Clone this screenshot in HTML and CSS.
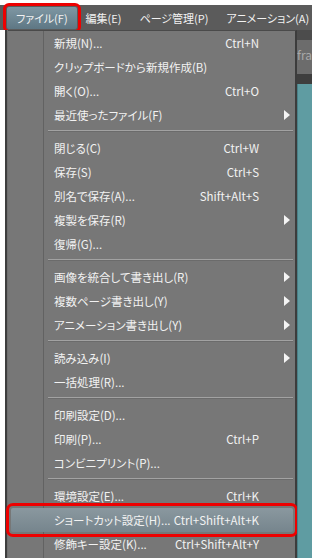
FILE: index.html
```html
<!DOCTYPE html>
<html lang="ja">
<head>
    <meta charset="UTF-8">
    <meta name="viewport" content="width=device-width, initial-scale=1.0">
    <title>ファイルメニュー</title>
    <link rel="stylesheet" href="styles.css">
</head>
<body>
    <div class="menubar">
        <span class="bar-item active">ファイル(F)</span>
        <span class="bar-item">編集(E)</span>
        <span class="bar-item">ページ管理(P)</span>
        <span class="bar-item">アニメーション(A)</span>
    </div>

    <div class="workspace">
        <div class="left-edge"></div>

        <!-- ファイルメニュー -->
        <div class="menu">
            <div class="item"><span class="label">新規(N)...</span><span class="key">Ctrl+N</span></div>
            <div class="item"><span class="label">クリップボードから新規作成(B)</span></div>
            <div class="item"><span class="label">開く(O)...</span><span class="key">Ctrl+O</span></div>
            <div class="item"><span class="label">最近使ったファイル(F)</span><span class="arrow"></span></div>
            <div class="sep"></div>
            <div class="item"><span class="label">閉じる(C)</span><span class="key">Ctrl+W</span></div>
            <div class="item"><span class="label">保存(S)</span><span class="key">Ctrl+S</span></div>
            <div class="item"><span class="label">別名で保存(A)...</span><span class="key">Shift+Alt+S</span></div>
            <div class="item"><span class="label">複製を保存(R)</span><span class="arrow"></span></div>
            <div class="item"><span class="label">復帰(G)...</span></div>
            <div class="sep"></div>
            <div class="item"><span class="label">画像を統合して書き出し(R)</span><span class="arrow"></span></div>
            <div class="item"><span class="label">複数ページ書き出し(Y)</span><span class="arrow"></span></div>
            <div class="item"><span class="label">アニメーション書き出し(Y)</span><span class="arrow"></span></div>
            <div class="sep"></div>
            <div class="item"><span class="label">読み込み(I)</span><span class="arrow"></span></div>
            <div class="item"><span class="label">一括処理(R)...</span></div>
            <div class="sep"></div>
            <div class="item"><span class="label">印刷設定(D)...</span></div>
            <div class="item"><span class="label">印刷(P)...</span><span class="key">Ctrl+P</span></div>
            <div class="item"><span class="label">コンビニプリント(P)...</span></div>
            <div class="sep"></div>
            <div class="item"><span class="label">環境設定(E)...</span><span class="key">Ctrl+K</span></div>
            <div class="item selected"><span class="label">ショートカット設定(H)...</span><span class="key">Ctrl+Shift+Alt+K</span></div>
            <div class="item"><span class="label">修飾キー設定(K)...</span><span class="key">Ctrl+Shift+Alt+Y</span></div>
        </div>

        <div class="right-edge">
            <div class="tab-bar"></div>
            <div class="tab-name">fra</div>
            <div class="ruler"></div>
            <div class="canvas"></div>
        </div>
    </div>
</body>
</html>
```

FILE: styles.css
```css
body {
    margin: 0;
    height: 558px;
    overflow: hidden;
    background: white;
    font-family: "Noto Sans CJK JP", "Noto Sans", sans-serif;
    font-size: 11.5px;
    font-feature-settings: "palt";
    color: #f2f2f2;
}
.menubar {
    margin-top: 5px;
    height: 25px;
    padding-left: 7px;
    display: flex;
    align-items: center;
    background: #5b5b5b;
    font-size: 11px;
    white-space: nowrap;
}
.bar-item {
    padding: 0 9px;
    line-height: 22px;
}
.bar-item.active {
    width: 54px;
    text-align: center;
    background: linear-gradient(#7f97a3, #5e7784);
    border-radius: 2px;
    outline: 3px solid #ee0000;
    outline-offset: 1px;
}
.workspace {
    display: flex;
    height: 528px;
}
.left-edge {
    width: 8px;
    background: linear-gradient(to right, white 5px, #3e3e3e 5px, #3e3e3e 7px, #6f6f6f 7px);
}
.menu {
    width: 290px;
    padding-left: 1px;
    border-top: 1px solid #4a4a4a;
    border-right: 2px solid #3c3c3c;
    background: linear-gradient(to right, transparent 35px, #626262 35px, #626262 36px, transparent 36px), #777777;
}
.item {
    display: flex;
    align-items: center;
    height: 24px;
    margin: 0 1px;
    padding-left: 44px;
}
.label {
    flex: 1;
    white-space: nowrap;
}
.key {
    margin-right: 35px;
    white-space: nowrap;
}
.arrow {
    width: 0;
    height: 0;
    margin-right: 4px;
    border-top: 5px solid transparent;
    border-bottom: 5px solid transparent;
    border-left: 6px solid #f4f4f4;
}
.item.selected {
    margin: 0 2px 0 2px;
    padding-left: 43px;
    background: linear-gradient(#8a989f, #76858d);
    border-radius: 2px;
    outline: 3px solid #ee0000;
    outline-offset: 2px;
}
.item.selected .key {
    margin-right: 34px;
}
.sep {
    height: 1px;
    margin: 3px 2px 4px 39px;
    background: #a2a2a2;
    border-bottom: 1px solid #6b6b6b;
}
.right-edge {
    flex: 1;
    display: flex;
    flex-direction: column;
    background: #5f9ca2;
}
.tab-bar {
    height: 10px;
    background: #4c4c4c;
}
.tab-name {
    height: 34px;
    line-height: 30px;
    background: #6c6c6c;
    color: #a8a8a8;
    font-size: 12px;
}
.ruler {
    height: 10px;
    background: #3e3e3e;
}
.canvas {
    flex: 1;
    border-left: 1px solid #4a7f86;
}
```
